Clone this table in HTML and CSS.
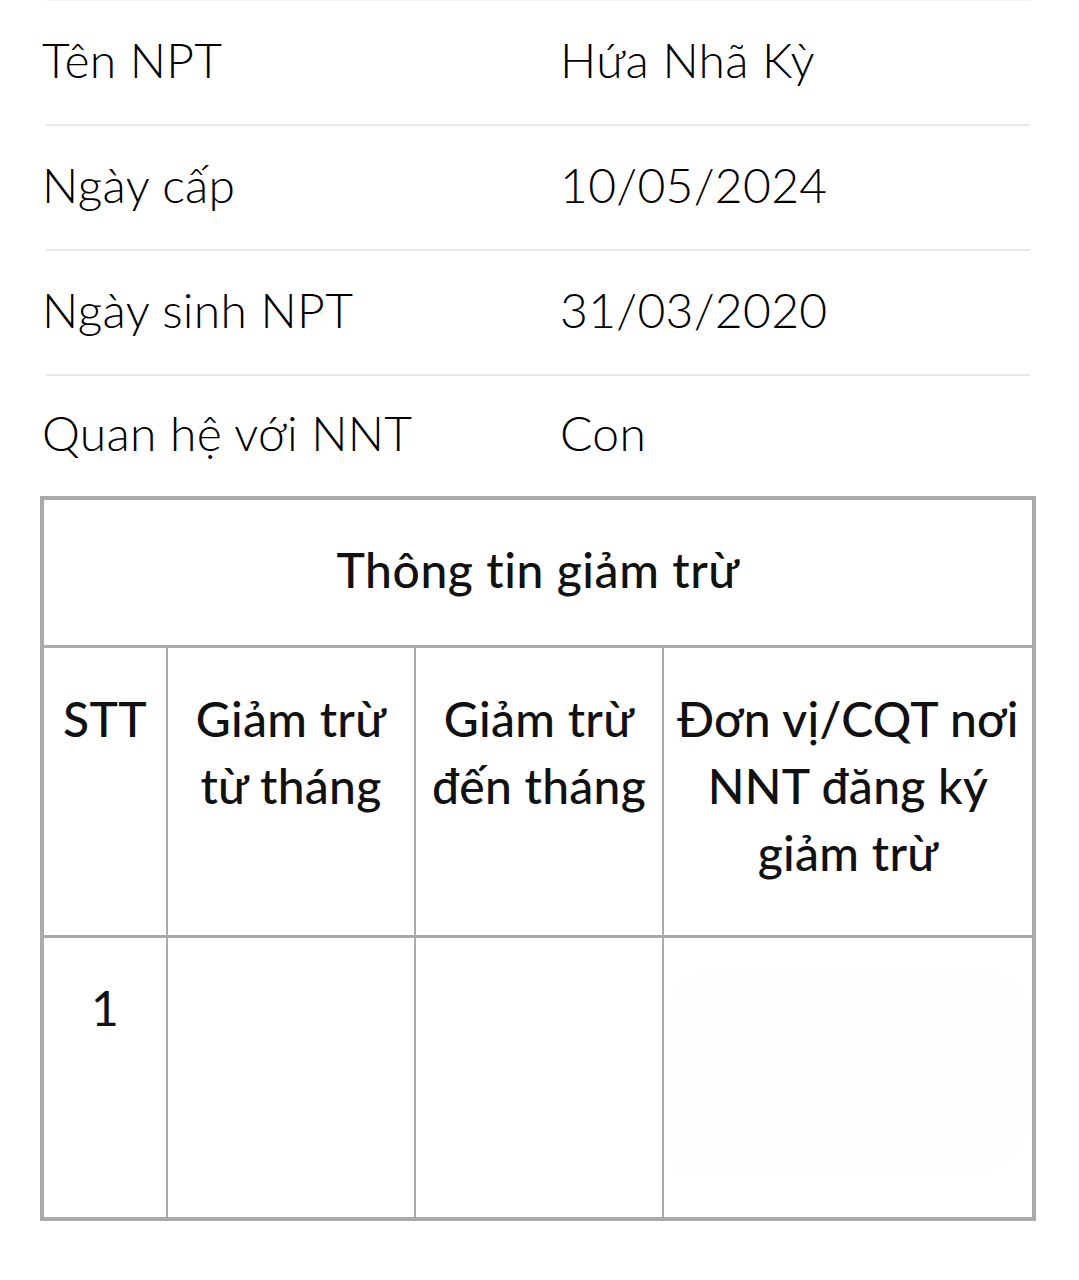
FILE: index.html
```html
<!DOCTYPE html>
<html lang="vi">
<head>
<meta charset="utf-8">
<title>Thông tin người phụ thuộc</title>
<link rel="stylesheet" href="styles.css">
</head>
<body>
<div class="info">
  <div class="row"><span class="label">Tên NPT</span><span class="value">Hứa Nhã Kỳ</span></div>
  <div class="row"><span class="label">Ngày cấp</span><span class="value">10/05/2024</span></div>
  <div class="row"><span class="label">Ngày sinh NPT</span><span class="value">31/03/2020</span></div>
  <div class="row last"><span class="label">Quan hệ với NNT</span><span class="value">Con</span></div>
</div>
<table class="deduct">
  <colgroup>
    <col class="c1"><col class="c2"><col class="c3"><col class="c4">
  </colgroup>
  <tr><th class="title" colspan="4">Thông tin giảm trừ</th></tr>
  <tr class="head">
    <th>STT</th>
    <th>Giảm trừ<br>từ tháng</th>
    <th>Giảm trừ<br>đến tháng</th>
    <th class="lastcol">Đơn vị/CQT nơi<br>NNT đăng ký<br>giảm trừ</th>
  </tr>
  <tr class="data">
    <td>1</td>
    <td></td>
    <td></td>
    <td class="lastcol"><div class="redact"></div></td>
  </tr>
</table>
</body>
</html>
```

FILE: styles.css
```css
html, body {
  margin: 0;
  padding: 0;
  background: #ffffff;
}
body {
  font-family: "Lato", "Liberation Sans", sans-serif;
  color: #111111;
  width: 1079px;
}
.info {
  margin-left: 46px;
  width: 984px;
  border-top: 1px solid #f1f1f1;
}
.row {
  display: flex;
  align-items: center;
  height: 117px;
  padding-bottom: 6px;
  border-bottom: 2px solid #e8e8e8;
  font-size: 48px;
  line-height: 1.2;
  font-weight: 300;
  letter-spacing: 0.3px;
  color: #000000;
}
.row.last {
  border-bottom: none;
  height: 114px;
}
.label {
  width: 518px;
  margin-left: -4px;
  flex: none;
}
.value {
  flex: 1;
}
.deduct {
  margin-left: 40px;
  width: 996px;
  table-layout: fixed;
  border-spacing: 0;
  border: 4px solid #aaaaaa;
  font-size: 48px;
}
.c1 { width: 124px; }
.c2 { width: 248px; }
.c3 { width: 248px; }
.c4 { width: 368px; }
.deduct th, .deduct td {
  padding: 0;
  border-right: 2px solid #aaaaaa;
  border-bottom: 3px solid #aaaaaa;
  text-align: center;
  font-weight: 500;
  color: #111111;
}
.deduct .lastcol, .deduct .title {
  border-right: none;
}
.deduct .title {
  padding: 0 0 6px 0;
  height: 139px;
  vertical-align: middle;
  letter-spacing: 0.6px;
}
.head th {
  height: 250px;
  padding-top: 37px;
  vertical-align: top;
  line-height: 67px;
  white-space: nowrap;
  letter-spacing: 0.3px;
}
.data td {
  height: 243px;
  padding-top: 36px;
  vertical-align: top;
  line-height: 67px;
  border-bottom: none;
  font-weight: 400;
}
.redact {
  margin: 0 4px 0 6px;
  height: 200px;
  background: #fdfdfd;
  border-radius: 30px 40px 60px 20px;
}
```
